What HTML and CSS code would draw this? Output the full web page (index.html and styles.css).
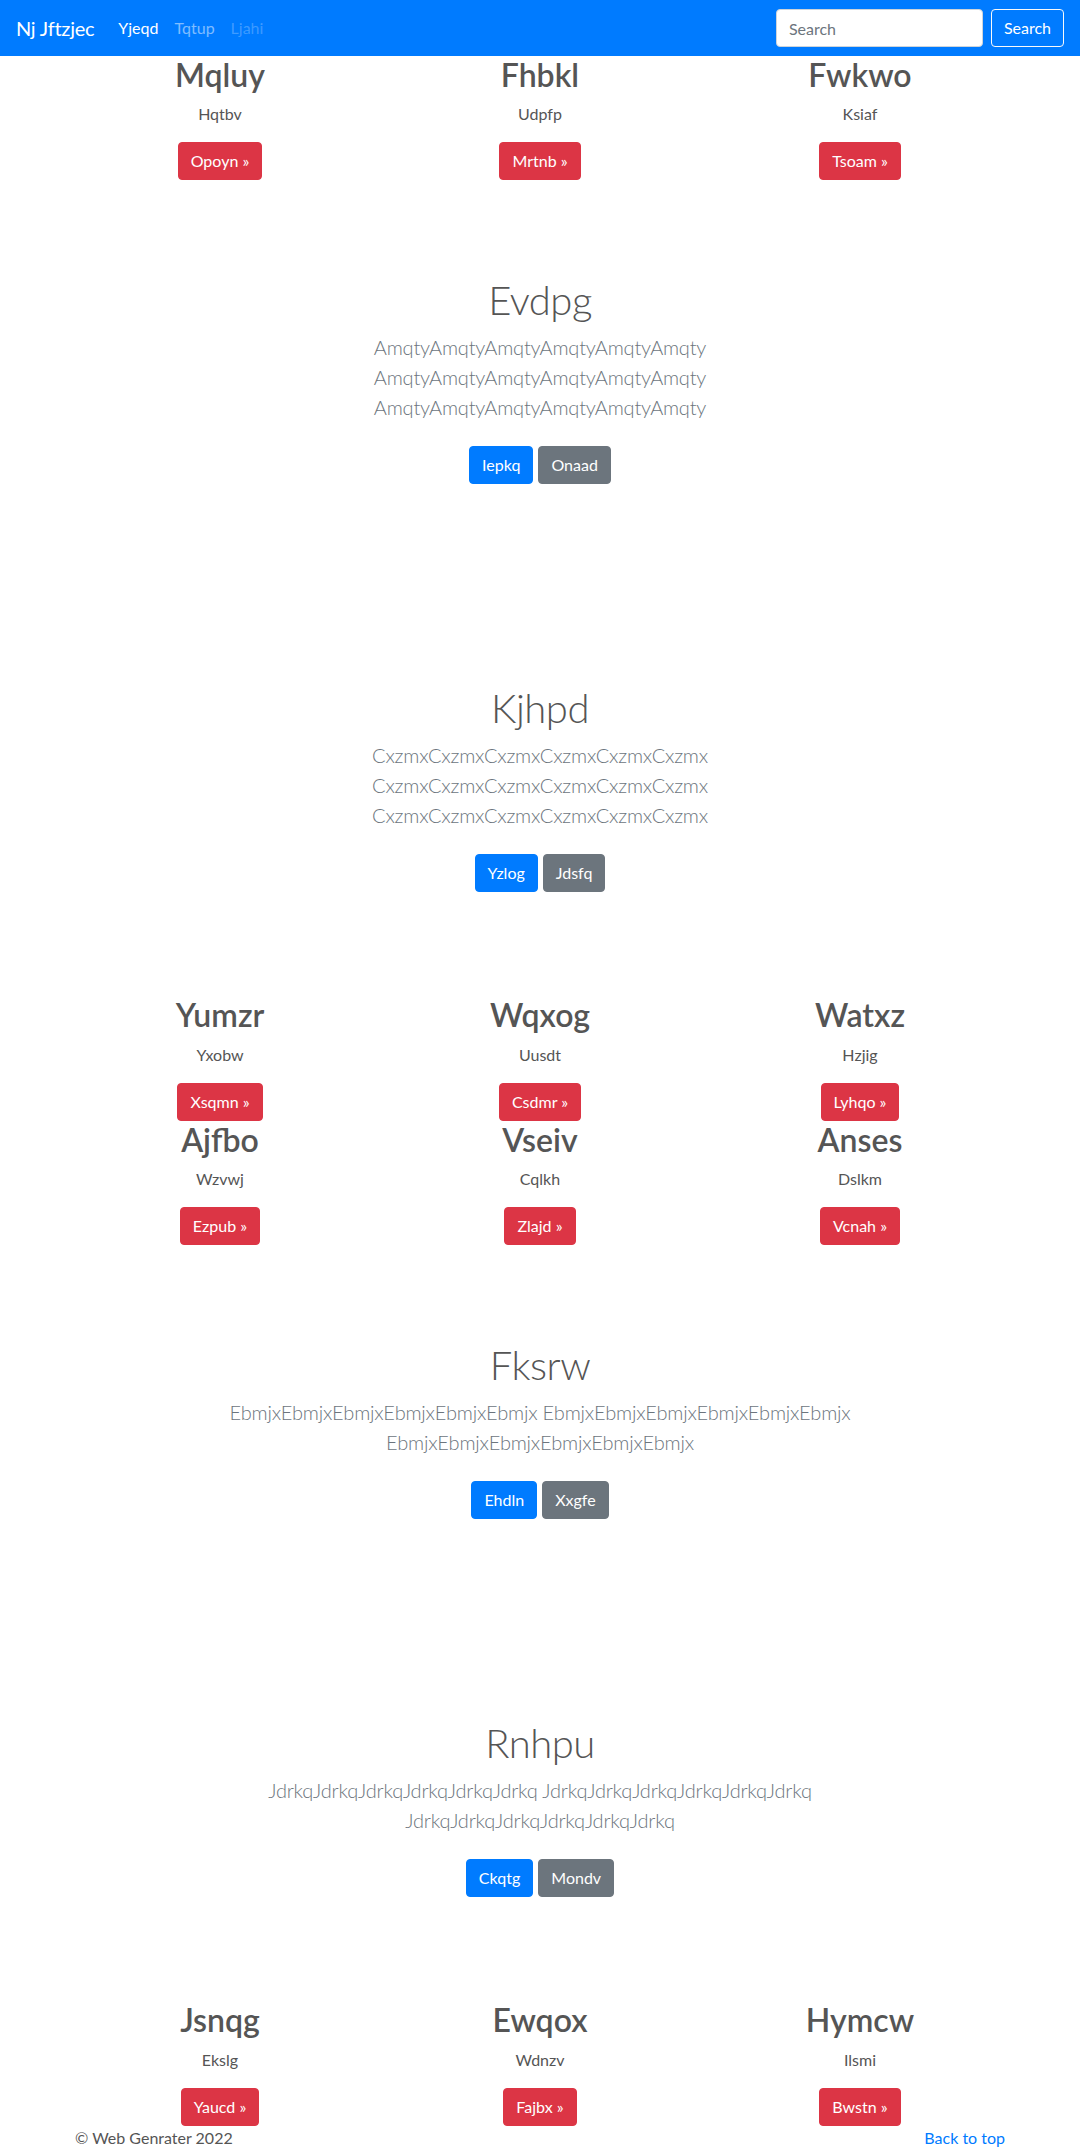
FILE: index.html
```html
<!DOCTYPE html>
<html lang="en">
<head>
<meta charset="utf-8">
<title>Nj Jftzjec</title>
<link rel="stylesheet" href="styles.css">
</head>
<body>
<nav class="navbar">
  <a class="brand" href="#">Nj Jftzjec</a>
  <ul class="nav">
    <li><a class="nav-link active" href="#">Yjeqd</a></li>
    <li><a class="nav-link" href="#">Tqtup</a></li>
    <li><a class="nav-link disabled" href="#">Ljahi</a></li>
  </ul>
  <form class="search">
    <input class="search-input" type="text" placeholder="Search">
    <button class="search-btn" type="button">Search</button>
  </form>
</nav>

<main>
  <div class="container">
    <div class="row">
      <div class="col"><h2>Mqluy</h2><p>Hqtbv</p><div class="col-action"><a class="btn btn-danger" href="#">Opoyn &raquo;</a></div></div>
      <div class="col"><h2>Fhbkl</h2><p>Udpfp</p><div class="col-action"><a class="btn btn-danger" href="#">Mrtnb &raquo;</a></div></div>
      <div class="col"><h2>Fwkwo</h2><p>Ksiaf</p><div class="col-action"><a class="btn btn-danger" href="#">Tsoam &raquo;</a></div></div>
    </div>
  </div>

  <section class="hero">
    <div class="hero-inner">
      <h1>Evdpg</h1>
      <p class="lead">AmqtyAmqtyAmqtyAmqtyAmqtyAmqty AmqtyAmqtyAmqtyAmqtyAmqtyAmqty AmqtyAmqtyAmqtyAmqtyAmqtyAmqty</p>
      <div class="actions"><a class="btn btn-primary" href="#">Iepkq</a><a class="btn btn-secondary" href="#">Onaad</a></div>
    </div>
  </section>

  <section class="hero">
    <div class="hero-inner">
      <h1>Kjhpd</h1>
      <p class="lead">CxzmxCxzmxCxzmxCxzmxCxzmxCxzmx CxzmxCxzmxCxzmxCxzmxCxzmxCxzmx CxzmxCxzmxCxzmxCxzmxCxzmxCxzmx</p>
      <div class="actions"><a class="btn btn-primary" href="#">Yzlog</a><a class="btn btn-secondary" href="#">Jdsfq</a></div>
    </div>
  </section>

  <div class="container">
    <div class="row">
      <div class="col"><h2>Yumzr</h2><p>Yxobw</p><div class="col-action"><a class="btn btn-danger" href="#">Xsqmn &raquo;</a></div></div>
      <div class="col"><h2>Wqxog</h2><p>Uusdt</p><div class="col-action"><a class="btn btn-danger" href="#">Csdmr &raquo;</a></div></div>
      <div class="col"><h2>Watxz</h2><p>Hzjig</p><div class="col-action"><a class="btn btn-danger" href="#">Lyhqo &raquo;</a></div></div>
      <div class="col"><h2>Ajfbo</h2><p>Wzvwj</p><div class="col-action"><a class="btn btn-danger" href="#">Ezpub &raquo;</a></div></div>
      <div class="col"><h2>Vseiv</h2><p>Cqlkh</p><div class="col-action"><a class="btn btn-danger" href="#">Zlajd &raquo;</a></div></div>
      <div class="col"><h2>Anses</h2><p>Dslkm</p><div class="col-action"><a class="btn btn-danger" href="#">Vcnah &raquo;</a></div></div>
    </div>
  </div>

  <section class="hero">
    <div class="hero-inner">
      <h1>Fksrw</h1>
      <p class="lead">EbmjxEbmjxEbmjxEbmjxEbmjxEbmjx EbmjxEbmjxEbmjxEbmjxEbmjxEbmjx EbmjxEbmjxEbmjxEbmjxEbmjxEbmjx</p>
      <div class="actions"><a class="btn btn-primary" href="#">Ehdln</a><a class="btn btn-secondary" href="#">Xxgfe</a></div>
    </div>
  </section>

  <section class="hero">
    <div class="hero-inner">
      <h1>Rnhpu</h1>
      <p class="lead">JdrkqJdrkqJdrkqJdrkqJdrkqJdrkq JdrkqJdrkqJdrkqJdrkqJdrkqJdrkq JdrkqJdrkqJdrkqJdrkqJdrkqJdrkq</p>
      <div class="actions"><a class="btn btn-primary" href="#">Ckqtg</a><a class="btn btn-secondary" href="#">Mondv</a></div>
    </div>
  </section>

  <div class="container">
    <div class="row">
      <div class="col"><h2>Jsnqg</h2><p>Ekslg</p><div class="col-action"><a class="btn btn-danger" href="#">Yaucd &raquo;</a></div></div>
      <div class="col"><h2>Ewqox</h2><p>Wdnzv</p><div class="col-action"><a class="btn btn-danger" href="#">Fajbx &raquo;</a></div></div>
      <div class="col"><h2>Hymcw</h2><p>Ilsmi</p><div class="col-action"><a class="btn btn-danger" href="#">Bwstn &raquo;</a></div></div>
    </div>
  </div>
</main>

<footer class="footer">
  <div class="footer-inner">
    <p class="copy">&copy; Web Genrater 2022</p>
    <a class="to-top" href="#">Back to top</a>
  </div>
</footer>
</body>
</html>
```
FILE: styles.css
```css
* { box-sizing: border-box; }

html, body { margin: 0; padding: 0; }

body {
  font-family: Lato, "Open Sans", "Liberation Sans", sans-serif;
  font-size: 16px;
  line-height: 1.5;
  color: #555;
  background: #fff;
}

a { text-decoration: none; }

/* ---------- navbar ---------- */
.navbar {
  display: flex;
  align-items: center;
  height: 56px;
  padding: 8px 16px;
  background: #007bff;
}

.brand {
  font-size: 20px;
  line-height: 30px;
  color: #fff;
  margin-right: 16px;
  letter-spacing: -0.25px;
}

.nav {
  display: flex;
  list-style: none;
  margin: 0;
  padding: 0;
  flex: 1;
}

.nav-link {
  display: block;
  padding: 8px;
  color: rgba(255, 255, 255, 0.5);
}

.nav-link.active { color: #fff; }
.nav-link.disabled { color: rgba(255, 255, 255, 0.25); }

.search {
  display: flex;
  align-items: center;
  gap: 8px;
  margin: 0;
}

.search-input {
  width: 207px;
  height: 38px;
  padding: 6px 12px;
  font: inherit;
  font-size: 16px;
  color: #495057;
  background: #fff;
  border: 1px solid #ced4da;
  border-radius: 4px;
  outline: none;
}

.search-input::placeholder { color: #6c757d; }

.search-btn {
  height: 38px;
  padding: 6px 12px;
  font: inherit;
  font-size: 16px;
  color: #fff;
  background: transparent;
  border: 1px solid #f8f9fa;
  border-radius: 4px;
}

/* ---------- columns ---------- */
.container {
  max-width: 960px;
  margin: 0 auto;
}

.row {
  display: grid;
  grid-template-columns: repeat(3, 1fr);
}

.col {
  padding: 0 15px;
  text-align: center;
}

.col h2 {
  margin: 0 0 8px;
  font-size: 32px;
  line-height: 1.2;
  font-weight: 600;
  color: #555;
}

.col p {
  margin: 0 0 16px;
  line-height: 24px;
}

.col-action {
  display: flex;
  justify-content: center;
}

/* ---------- buttons ---------- */
.btn {
  display: inline-block;
  height: 38px;
  padding: 6px 12px;
  font-size: 16px;
  line-height: 24px;
  color: #fff;
  border: 1px solid transparent;
  border-radius: 4px;
  white-space: nowrap;
}

.btn-danger { background: #dc3545; border-color: #dc3545; }
.btn-primary { background: #007bff; border-color: #007bff; }
.btn-secondary { background: #6c757d; border-color: #6c757d; }

/* ---------- hero sections ---------- */
.hero {
  padding: 96px 15px;
  text-align: center;
}

.hero-inner {
  max-width: 640px;
  margin: 0 auto;
}

.hero h1 {
  margin: 0 0 8px;
  font-size: 40px;
  line-height: 48px;
  font-weight: 300;
  letter-spacing: -0.5px;
  color: #555;
}

.lead {
  margin: 0 0 16px;
  font-size: 20px;
  line-height: 30px;
  font-weight: 300;
  letter-spacing: -0.2px;
  color: #6c757d;
}

.actions {
  display: flex;
  justify-content: center;
  gap: 5px;
  padding: 8px 0;
}

/* ---------- footer ---------- */
.footer-inner {
  max-width: 960px;
  margin: 0 auto;
  padding: 0 15px;
  display: flex;
  justify-content: space-between;
  align-items: baseline;
}

.copy {
  margin: 0;
  line-height: 24px;
  color: #555;
}

.to-top {
  color: #007bff;
  line-height: 24px;
}
```
